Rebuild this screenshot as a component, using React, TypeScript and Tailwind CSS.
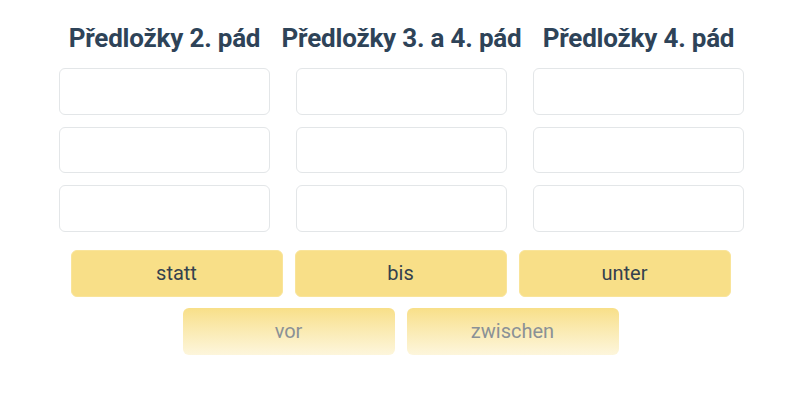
import React from "react";

const columns = ["Předložky 2. pád", "Předložky 3. a 4. pád", "Předložky 4. pád"];

export default function App() {
  return (
    <div
      className="w-[800px] h-[400px] bg-white pl-[3px] pt-[22px]"
      style={{ fontFamily: "Roboto, 'Noto Sans', sans-serif" }}
    >
      <div className="flex justify-center gap-[26px]">
        {columns.map((c) => (
          <div key={c} className="w-[211px] flex flex-col items-center">
            <div className="h-[32px] flex items-center justify-center whitespace-nowrap text-[26px] font-bold text-[#2e4358] tracking-[-0.2px]">
              {c}
            </div>
            <div className="mt-[14px] flex flex-col gap-[12px] w-full">
              {[0, 1, 2].map((i) => (
                <div
                  key={i}
                  className="h-[46.5px] w-full rounded-[6px] border border-[#e3e6e8] bg-white"
                />
              ))}
            </div>
          </div>
        ))}
      </div>
      <div className="mt-[18px] flex flex-col items-center gap-[11px] pr-[2px]">
        <div className="flex gap-[12px]">
          {["statt", "bis", "unter"].map((w) => (
            <div
              key={w}
              className="w-[212px] h-[47px] rounded-[6px] border border-[#f9e49a] bg-[#f8df88] flex items-center justify-center text-[20px] text-[#34414e]"
            >
              {w}
            </div>
          ))}
        </div>
        <div className="flex gap-[12px]">
          {["vor", "zwischen"].map((w) => (
            <div
              key={w}
              className="w-[212px] h-[47px] rounded-[6px] bg-gradient-to-b from-[#f8df88] to-[#fdf6dc] flex items-center justify-center text-[20px] text-[#8a9196]"
            >
              {w}
            </div>
          ))}
        </div>
      </div>
    </div>
  );
}
